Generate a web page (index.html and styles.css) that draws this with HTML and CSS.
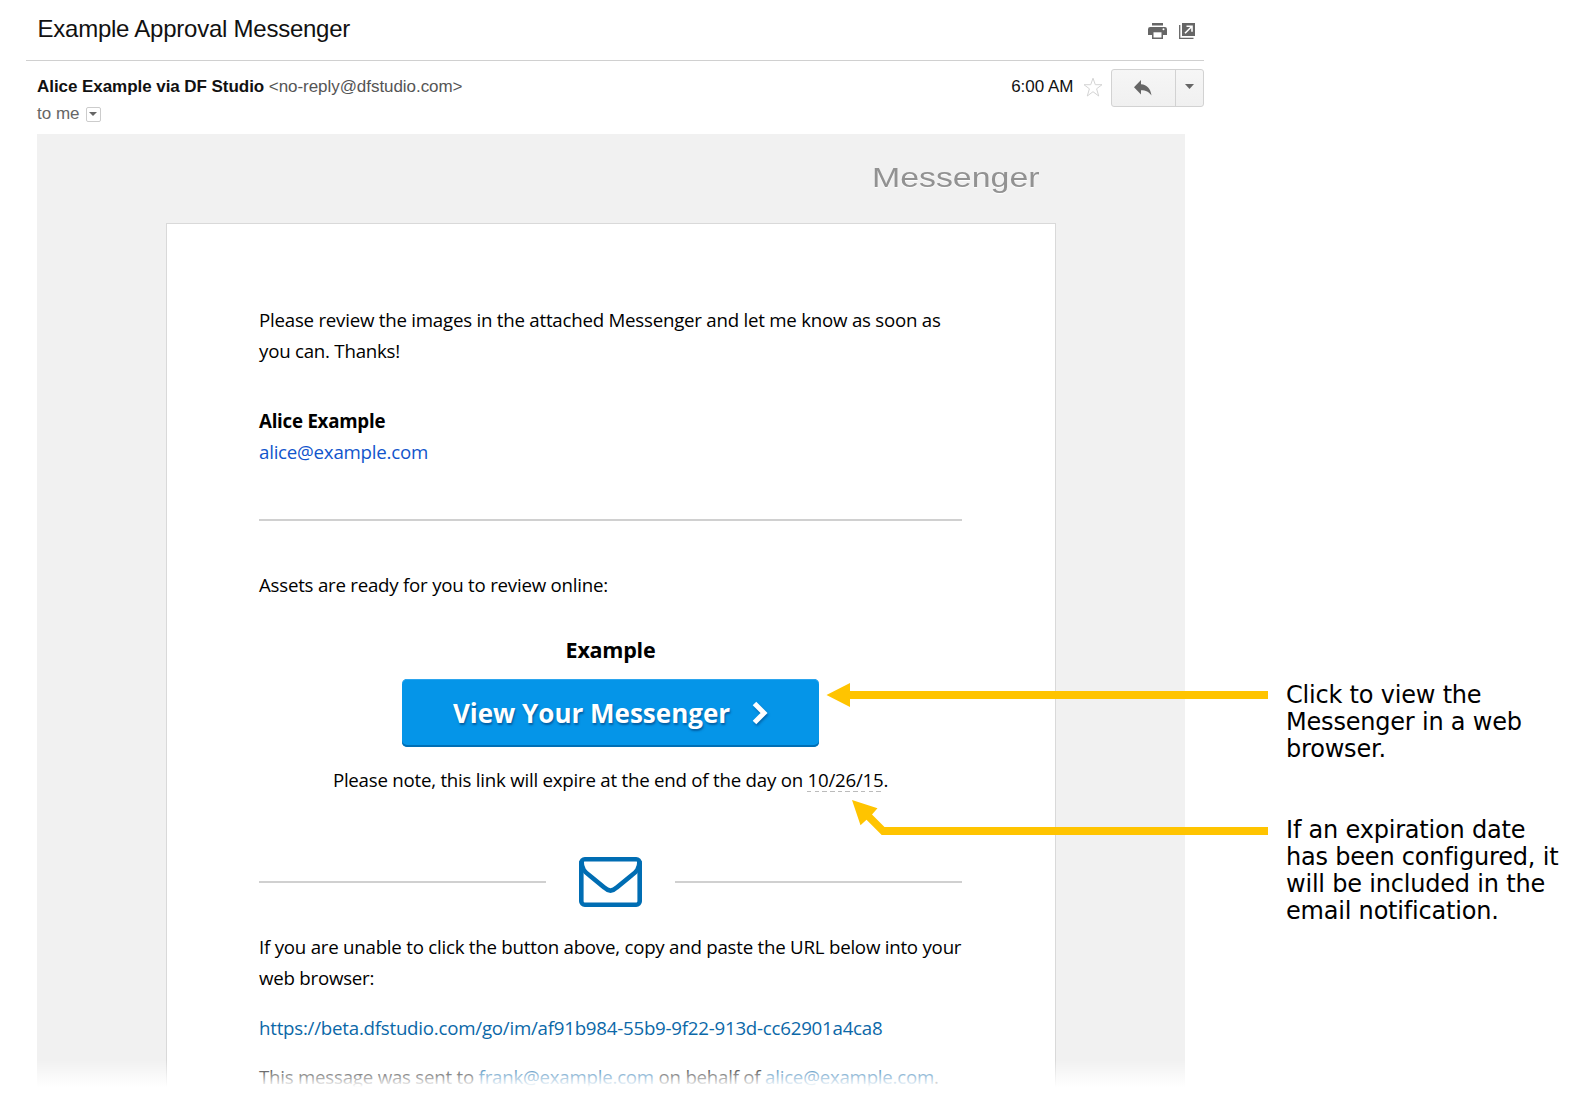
FILE: index.html
```html
<!DOCTYPE html>
<html lang="en">
<head>
<meta charset="utf-8">
<title>Example Approval Messenger</title>
<link rel="stylesheet" href="styles.css">
</head>
<body>
<div class="page">
  <main class="mail">
    <header class="subject">
      <h1 class="subject-title"><span>Example Approval Messenger</span></h1>
      <div class="subject-tools">
        <svg class="icon-print" viewBox="0 0 19 16"><path fill="#666" d="M4 0h11v2.600H4zM2.200 4h14.600Q19 4 19 6.200V12h-4V9H4v3H0V6.200Q0 4 2.200 4z"/><path fill="#666" d="M4 8h11v8H4z"/><path fill="#fff" d="M5.500 9.300h8v5.200h-8z"/><circle cx="15.500" cy="6.300" r="1" fill="#fff"/></svg>
        <svg class="icon-open" viewBox="0 0 16 16"><path fill="#666" d="M3 0h13v13H3z"/><path fill="none" stroke="#666" stroke-width="1.300" d="M.7 2v13.300H14.500"/><path fill="none" stroke="#fff" stroke-width="1.600" d="M6 10.200 12.500 3.700M7.500 3.300H13V8.800"/></svg>
      </div>
    </header>
    <section class="sender">
      <div class="sender-who">
        <div class="from"><b>Alice Example via DF Studio</b> <span>&lt;no-reply@dfstudio.com&gt;</span></div>
        <div class="to"><span>to me</span><i class="to-more"><svg viewBox="0 0 8 4"><path fill="#666" d="M0 0h8L4 4z"/></svg></i></div>
      </div>
      <div class="sender-actions">
        <span class="time">6:00 AM</span>
        <svg class="star" viewBox="0 0 20 20"><path fill="#fff" stroke="#d4d4d4" d="M10 1.200 12.300 7.700H19L13.600 11.800 15.700 19 10 14.700 4.300 19 6.400 11.800 1 7.700H7.700z"/></svg>
        <div class="reply-group">
          <div class="reply"><svg viewBox="0 0 18 16"><path fill="#666" d="M7 0v4.300C13 4.800 16.500 8.500 17.500 15.500 15 11.800 12 10.300 7 10.200V14.500L0 7.300z"/></svg></div>
          <div class="reply-more"><svg viewBox="0 0 9 5"><path fill="#666" d="M0 0h9L4.500 5z"/></svg></div>
        </div>
      </div>
    </section>
    <article class="message">
      <div class="brand"><span>Messenger</span></div>
      <div class="card">
        <p class="intro">Please review the images in the attached Messenger and let me know as soon as<br>you can. Thanks!</p>
        <p class="signature"><b>Alice Example</b><br><a class="mail-link">alice@example.com</a></p>
        <hr class="rule">
        <p class="ready">Assets are ready for you to review online:</p>
        <h2 class="asset">Example</h2>
        <a class="cta"><span>View Your Messenger</span><svg viewBox="0 0 16 24"><path fill="none" stroke="#fff" stroke-width="5" d="M2.500 2.500 12 12 2.500 21.500"/></svg></a>
        <p class="expiry">Please note, this link will expire at the end of the day on <span class="date">10/26/15</span>.</p>
        <div class="divider">
          <i></i>
          <svg viewBox="0 0 63 50"><rect x="2.300" y="2.300" width="58.400" height="45.400" rx="3.500" fill="none" stroke="#006db3" stroke-width="4.600"/><path fill="none" stroke="#006db3" stroke-width="4.600" d="M2.500 4C2.500 12 6 15 10 18L25.500 30.700Q31.500 36.500 37.500 30.700L53 18C57 15 60.500 12 60.500 4"/></svg>
          <i></i>
        </div>
        <p class="fallback">If you are unable to click the button above, copy and paste the URL below into your<br>web browser:</p>
        <p class="url"><a>https://beta.dfstudio.com/go/im/af91b984-55b9-9f22-913d-cc62901a4ca8</a></p>
        <p class="sent">This message was sent to <a>frank@example.com</a> on behalf of <a>alice@example.com</a>.</p>
      </div>
      <div class="fade"></div>
    </article>
  </main>
  <aside class="notes">
    <p>Click to view the<br>Messenger in a web<br>browser.</p>
    <p>If an expiration date<br>has been configured, it<br>will be included in the<br>email notification.</p>
  </aside>
  <svg class="arrows" viewBox="0 0 1580 1096"><path fill="#ffc400" d="M826.500 695 850 683V691H1268V699H850V707zM852 800 877.500 808.300 872 814.500 884.500 827H1268V835H881.700L866.500 819.800 860.500 825.300z"/></svg>
</div>
</body>
</html>
```
FILE: styles.css
```css
* { box-sizing: border-box; }
body { margin: 0; background: #fff; }
h1, h2, p { margin: 0; font-weight: normal; }
svg { display: block; }

.page { position: relative; display: flex; width: 1580px; height: 1096px; overflow: hidden; }
.mail { width: 1204px; padding-left: 26px; font-family: Arial, "Liberation Sans", sans-serif; }

.subject { display: flex; justify-content: space-between; height: 61px; padding: 14px 9px 0 11.500px; border-bottom: 1px solid #d0d0d0; }
.subject-title { font-size: 24px; line-height: 29px; letter-spacing: -.24px; color: #111; white-space: nowrap; }
.subject-tools { display: flex; gap: 12px; padding-top: 9px; }
.icon-print { width: 19px; height: 16px; }
.icon-open { width: 16px; height: 16px; }

.sender { display: flex; justify-content: space-between; height: 73px; padding: 8px 0 0 11px; }
.from { font-size: 17px; line-height: 20px; padding-top: 8px; letter-spacing: -.055px; color: #555; white-space: nowrap; }
.from b { color: #111; }
.to { display: flex; align-items: center; gap: 6px; height: 20px; margin-top: 7px; font-size: 17px; color: #666; }
.to-more { display: flex; align-items: center; justify-content: center; width: 15px; height: 15px; border: 1px solid #ccc; border-radius: 2px; }
.to-more svg { width: 8px; height: 4px; }
.sender-actions { display: flex; }
.time { padding-top: 8px; font-size: 17px; line-height: 20px; color: #111; }
.star { width: 20px; height: 20px; margin: 8px 7.500px 0 9.500px; }
.reply-group { display: flex; width: 93.500px; height: 38px; border: 1px solid #d2d2d2; border-radius: 3px; background: linear-gradient(#f6f6f6, #f0f0f0); }
.reply { display: flex; align-items: center; justify-content: center; width: 64px; border-right: 1px solid #d2d2d2; }
.reply svg { width: 18px; height: 16px; }
.reply-more { display: flex; flex: 1; align-items: center; justify-content: center; padding-bottom: 3px; }
.reply-more svg { width: 9px; height: 5px; }

.message { position: relative; width: 1148px; height: 953px; margin-left: 11px; padding: 0 129px; background: #f1f1f1; overflow: hidden; }
.brand { height: 89px; padding: 27px 16px 0 0; text-align: right; font-size: 28px; line-height: 34px; color: #929292; text-shadow: 0 1px 1px #fff; }
.brand span { display: inline-block; transform: scaleX(1.21); transform-origin: right; }

.card { height: 900px; padding: 80px 93px 0 92px; border: 1px solid #d9d9d9; background: #fff; font-family: "Open Sans", sans-serif; font-size: 18.700px; line-height: 31px; letter-spacing: -.236px; color: #000; white-space: nowrap; }
.signature { margin-top: 39px; }
.mail-link { color: #1155cc; }
.rule { height: 2px; margin: 52px 0 48px; border: 0; background: #d0d0d0; }
.asset { margin-top: 34px; font-size: 21.500px; font-weight: bold; line-height: 32px; text-align: center; }
.cta { display: flex; align-items: center; justify-content: center; gap: 22px; width: 417px; height: 68px; margin: 13px auto 0; border-radius: 5px; background: #0595e8; box-shadow: inset 0 -2px #006fb5, inset 0 1px #2ba5ee; color: #fff; font-size: 26px; font-weight: bold; letter-spacing: 0; text-shadow: 1px 2px 2px rgba(0, 60, 120, .6); }
.cta svg { width: 16px; height: 24px; filter: drop-shadow(1px 2px 1px rgba(0, 60, 120, .5)); }
.expiry { margin-top: 17px; text-align: center; }
.date { background: repeating-linear-gradient(90deg, #bbb 0 4.500px, transparent 4.500px 7.700px) 0 100% / 100% 1px no-repeat; }
.divider { display: flex; align-items: center; justify-content: space-between; height: 50px; margin-top: 61.500px; }
.divider i { width: 287px; height: 2px; background: #d0d0d0; }
.divider svg { width: 63px; height: 50px; }
.fallback { margin-top: 24.500px; }
.url { margin-top: 19px; }
.url a, .sent a { color: #0b68a8; }
.sent { margin-top: 18px; }
.fade { position: absolute; left: 0; right: 0; bottom: 0; height: 27px; background: linear-gradient(rgba(255, 255, 255, 0), #fff); }

.notes { display: flex; flex-direction: column; gap: 54px; padding: 682px 0 0 82px; font-family: Verdana, "DejaVu Sans", sans-serif; font-size: 24px; line-height: 27px; letter-spacing: -.2px; color: #000; white-space: nowrap; }
.arrows { position: absolute; left: 0; top: 0; width: 1580px; height: 1096px; pointer-events: none; }
```
